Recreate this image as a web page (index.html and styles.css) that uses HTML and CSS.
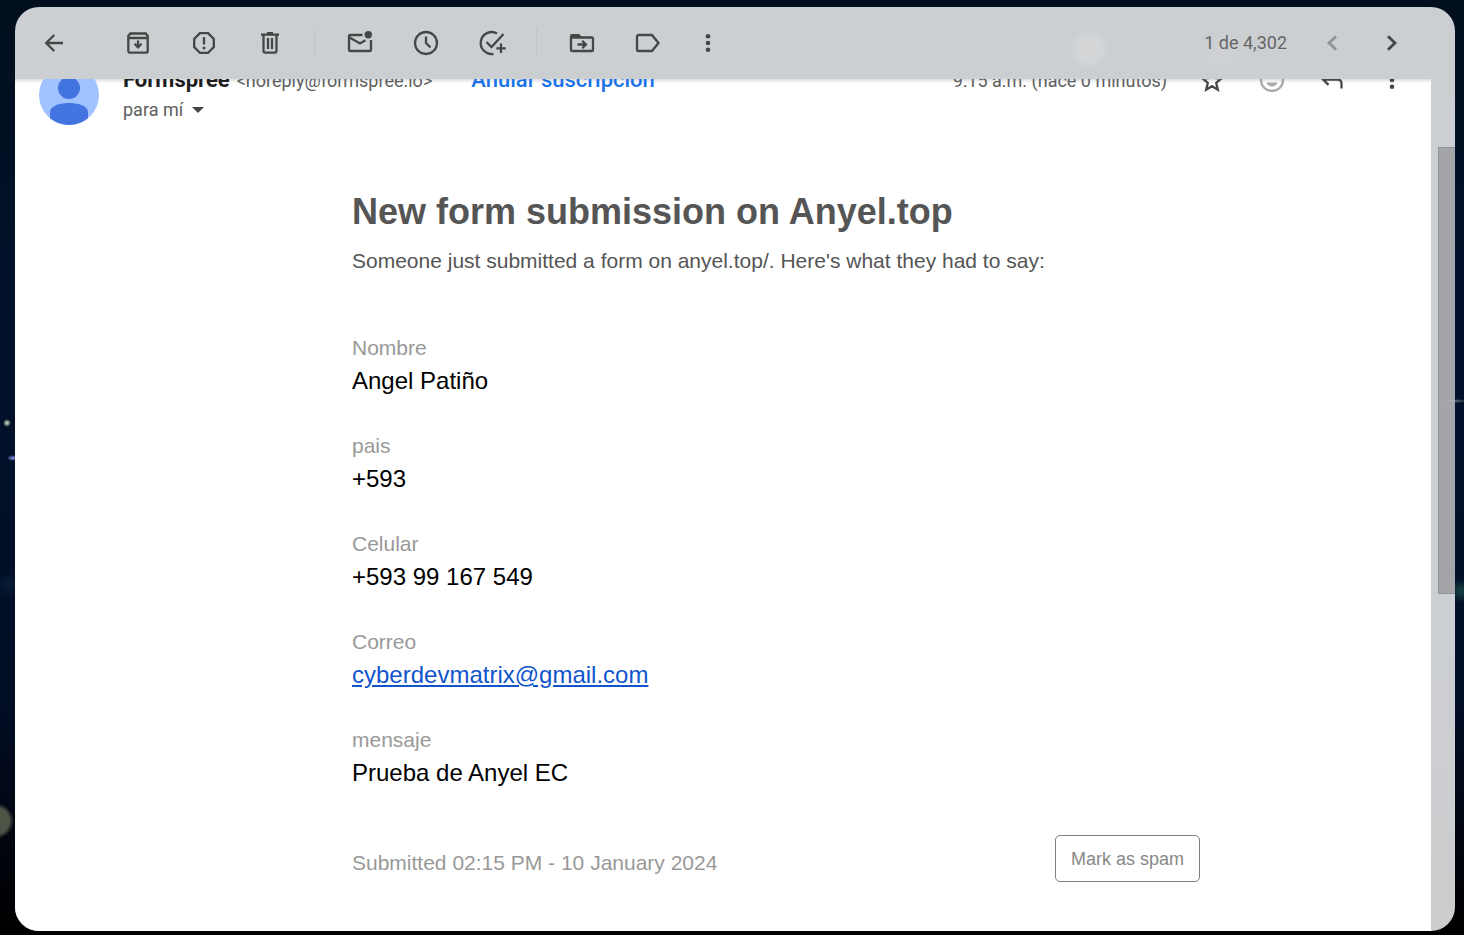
FILE: index.html
```
<!DOCTYPE html>
<html lang="es">
<head>
<meta charset="utf-8">
<meta name="viewport" content="width=device-width, initial-scale=1">
<title>New form submission on Anyel.top</title>
<link rel="stylesheet" href="styles.css">
</head>
<body>
<main class="window">
  <header class="toolbar">
    <button class="tool tool-back" aria-label="Volver"><svg class="icon" viewBox="0 0 30 30"><path class="line" d="M24 15H8M15.200 7L7.200 15l8 8"/></svg></button>
    <div class="group">
      <button class="tool" aria-label="Archivar"><svg class="icon" viewBox="0 0 30 30"><path class="line" d="M5.300 9.500V23a1.700 1.700 0 0 0 1.700 1.700h16a1.700 1.700 0 0 0 1.700-1.700V8l-2-2.500h-15.400l-2 2.500v2h19M15 12.500v6.500M11.500 15.800l3.500 3.500 3.500-3.500"/></svg></button>
      <button class="tool" aria-label="Marcar como spam"><svg class="icon" viewBox="0 0 30 30"><path class="line" d="M10.900 5.200h8.200l5.700 5.700v8.200l-5.700 5.700h-8.200l-5.700-5.700v-8.200zM15 9v7.500"/><circle cx="15" cy="20" r="1.500"/></svg></button>
      <button class="tool" aria-label="Eliminar"><svg class="icon" viewBox="0 0 30 30"><path class="line" d="M6 6.700h18M12 5.200h6M8.500 7v16.300a1.300 1.300 0 0 0 1.300 1.300h10.400a1.300 1.300 0 0 0 1.300-1.300V7M13 10v11M17 10v11"/></svg></button>
    </div>
    <div class="group">
      <button class="tool" aria-label="Marcar como no leído"><svg class="icon" viewBox="0 0 30 30"><path class="line" d="M17.500 7H5.500a1.500 1.500 0 0 0-1.500 1.500V21.500a1.500 1.500 0 0 0 1.500 1.500h19a1.500 1.500 0 0 0 1.500-1.500V12M4.500 9.500L15 15.500l5.500-3.200"/><circle cx="23.300" cy="6.700" r="3.700"/></svg></button>
      <button class="tool" aria-label="Posponer"><svg class="icon" viewBox="0 0 30 30"><circle class="line" cx="15" cy="15" r="11"/><path class="line" d="M15 8.500V15l4.500 4.500"/></svg></button>
      <button class="tool" aria-label="Agregar a Tasks"><svg class="icon" viewBox="0 0 30 30"><path class="line" d="M20 5.400A11 11 0 1 0 16.500 25.900M9.500 14l5 5L26.500 6M24 15.500v9.500M19.300 20.300h9.500"/></svg></button>
    </div>
    <div class="group">
      <button class="tool" aria-label="Mover a"><svg class="icon" viewBox="0 0 30 30"><path class="line" d="M4 8v13.500a1.500 1.500 0 0 0 1.500 1.500h19a1.500 1.500 0 0 0 1.500-1.500v-10.500a1.500 1.500 0 0 0-1.500-1.500H4M10.500 16.500h8M15.200 12.700l3.800 3.800-3.800 3.800"/><path d="M3 10V8a2 2 0 0 1 2-2h7l4 4z"/></svg></button>
      <button class="tool" aria-label="Etiquetas"><svg class="icon" viewBox="0 0 30 30"><path class="line" d="M5.500 7h13.500l6.500 8-6.500 8H5.500a1.500 1.500 0 0 1-1.500-1.500v-13A1.500 1.500 0 0 1 5.500 7z"/></svg></button>
      <button class="tool tool-more" aria-label="Más"><svg class="icon" viewBox="0 0 30 30"><circle cx="15" cy="8.300" r="2.300"/><circle cx="15" cy="15" r="2.300"/><circle cx="15" cy="21.700" r="2.300"/></svg></button>
    </div>
    <nav class="pager" aria-label="Mensajes">
      <span class="count">1 de 4,302</span>
      <button class="round faded" aria-label="Más recientes"><svg class="icon" viewBox="0 0 30 30"><path class="line bold" d="M19 8.500L12 15l7 6.500"/></svg></button>
      <button class="round" aria-label="Anteriores"><svg class="icon" viewBox="0 0 30 30"><path class="line bold" d="M11 8.300L18 15l-7 6.700"/></svg></button>
    </nav>
  </header>
  <div class="body">
    <article class="message">
      <header class="sender">
        <svg class="avatar" viewBox="0 0 60 60" aria-hidden="true"><circle class="avatar-disc" cx="30" cy="30" r="30"/><circle class="avatar-figure" cx="30" cy="23" r="11"/><path class="avatar-figure" d="M11 53.200V47c0-5 7-9 19-9s19 4 19 9v6.200A30 30 0 0 1 11 53.200z"/></svg>
        <div class="who">
          <div class="from">
            <strong class="name">Formspree</strong>
            <span class="address">&lt;noreply@formspree.io&gt;</span>
            <a class="unsubscribe" href="#">Anular suscripción</a>
          </div>
          <button class="recipients">para mí <svg class="caret" viewBox="0 0 12 6"><path d="M0 0h12L6 6z"/></svg></button>
        </div>
        <time class="date">9:15 a.m. (hace 0 minutos)</time>
        <div class="actions">
          <button class="round" aria-label="Destacar"><svg class="icon" viewBox="0 0 30 30"><path class="line" d="M15 6.500l2.600 6.400 6.700.6-5.100 4.400 1.600 6.800-5.800-3.500-5.800 3.500 1.600-6.800-5.100-4.400 6.700-.6z"/></svg></button>
          <button class="round faded" aria-label="Reaccionar"><svg class="icon" viewBox="0 0 30 30"><circle class="line" cx="15" cy="15" r="11"/><path d="M9.300 17.500h11.400c-1 2.500-3 4-5.700 4s-4.700-1.500-5.700-4z"/><circle cx="11" cy="11.500" r="1.700"/><circle cx="19" cy="11.500" r="1.700"/></svg></button>
          <button class="round" aria-label="Responder"><svg class="icon" viewBox="0 0 30 30"><path class="line" d="M11.500 8.500L5.800 14.200l5.700 5.700M6 14.500H20.500c3 0 4 2 4 4V23.500"/></svg></button>
          <button class="round" aria-label="Más opciones"><svg class="icon" viewBox="0 0 30 30"><circle cx="15" cy="8.300" r="2.300"/><circle cx="15" cy="15" r="2.300"/><circle cx="15" cy="21.700" r="2.300"/></svg></button>
        </div>
      </header>
      <section class="content" lang="en">
        <h1 class="title">New form submission on Anyel.top</h1>
        <p class="intro">Someone just submitted a form on anyel.top/. Here's what they had to say:</p>
        <dl class="fields">
          <dt>Nombre</dt><dd>Angel Patiño</dd>
          <dt>pais</dt><dd>+593</dd>
          <dt>Celular</dt><dd>+593 99 167 549</dd>
          <dt>Correo</dt><dd><a class="mail" href="mailto:cyberdevmatrix@gmail.com">cyberdevmatrix@gmail.com</a></dd>
          <dt>mensaje</dt><dd>Prueba de Anyel EC</dd>
        </dl>
        <footer class="foot">
          <span>Submitted 02:15 PM - 10 January 2024</span>
          <button class="spam">Mark as spam</button>
        </footer>
      </section>
    </article>
    <div class="track"><div class="thumb"></div></div>
  </div>
</main>
</body>
</html>
```
FILE: styles.css
```
* { box-sizing: border-box; }

body {
  margin: 0;
  min-height: 100vh;
  display: flex;
  padding: 7px 9px 4px 15px;
  font-family: Roboto, "Open Sans", sans-serif;
  background:
    radial-gradient(circle at 1089px 49px, #25313a 12px, transparent 20px),
    radial-gradient(circle at 1222px 56px, #101c28 6px, transparent 20px),
    radial-gradient(circle at 7px 423px, #b0c0a8 1px, transparent 4px),
    radial-gradient(ellipse 6px 3px at 13px 458px, #8d96f0, transparent),
    radial-gradient(circle at 8px 585px, #071c33 2px, transparent 12px),
    radial-gradient(circle at -4px 821px, #4d5547 13px, transparent 18px),
    radial-gradient(circle at 1461px 591px, #123a3e 3px, transparent 12px),
    radial-gradient(ellipse 12px 2px at 1456px 401px, #5c6d78, transparent),
    linear-gradient(#020f1e, #02112a 30%, #020e26 75%, #000105 96%, #000);
}

.window {
  flex: 1;
  display: flex;
  flex-direction: column;
  border-radius: 24px;
  overflow: hidden;
  background: rgba(255, 255, 255, .8);
}

button {
  border: 0;
  padding: 0;
  background: none;
  color: #444746;
  font: inherit;
  display: flex;
  align-items: center;
  justify-content: center;
}

.icon { width: 30px; height: 30px; fill: currentColor; }
.line { fill: none; stroke: currentColor; stroke-width: 2.3; }
.line.bold { stroke-width: 2.8; }

.toolbar {
  height: 72px;
  flex: none;
  display: flex;
  align-items: center;
  padding: 0 33px 0 9px;
}
.tool { width: 66px; height: 60px; }
.tool-back { width: 60px; margin-right: 21px; }
.tool-more { width: 54px; }
.group { display: flex; align-items: center; }
.group + .group::before {
  content: "";
  width: 1px;
  height: 30px;
  margin: 0 12px 0 11px;
  background: #c0c3c6;
}
.pager { margin-left: auto; display: flex; align-items: center; }
.count { margin-right: 15px; padding-bottom: 2px; font-size: 18px; color: #666; }
.round { width: 60px; height: 30px; }
.faded { opacity: .45; }

.body { flex: 1; display: flex; overflow: hidden; }
.message {
  flex: 1;
  background: #fff;
  box-shadow: inset 0 4px 4px -3px rgba(0, 0, 0, .2);
}

/* The message is scrolled slightly under the toolbar. */
.sender {
  display: flex;
  margin-top: -14px;
  padding: 0 9px 0 24px;
}
.avatar { width: 60px; height: 60px; margin-right: 24px; }
.avatar-disc { fill: #a0c2ff; }
.avatar-figure { fill: #4374e0; }
.who { flex: 1; line-height: 30px; }
.from { height: 30px; display: flex; align-items: baseline; white-space: nowrap; }
.name { font-size: 22px; color: #1f1f1f; }
.address { margin-left: 7px; font-size: 18px; color: #5e5e5e; }
.unsubscribe {
  margin-left: 39px;
  font-size: 22px;
  font-weight: 500;
  color: #1a73e8;
  text-decoration: none;
}
.recipients { gap: 9px; font-size: 18px; line-height: 30px; color: #5e5e5e; }
.caret { width: 12px; height: 6px; fill: #444746; }
.date { margin-right: 15px; font-size: 18px; line-height: 32px; color: #5e5e5e; }
.actions { display: flex; }

.content {
  max-width: 954px;
  margin: 63px auto 0;
  padding-left: 106px;
  font-family: "Liberation Sans", Arial, sans-serif;
}
.title { margin: 0; font-size: 36px; line-height: 48px; color: #555; }
.intro { margin: 9px 0 0; font-size: 21px; line-height: 32px; color: #555; }
.fields { margin: 55px 0 0; }
.fields dt { font-size: 21px; line-height: 32px; color: #999; }
.fields dd { margin: 0 0 32px; font-size: 24px; line-height: 34px; color: #000; }
.mail { color: #15c; }
.foot {
  display: flex;
  justify-content: space-between;
  align-items: flex-end;
  margin-top: 45px;
  padding-bottom: 32px;
  font-size: 21px;
  line-height: 38px;
  color: #999;
}
.spam {
  height: 47px;
  padding: 0 15px;
  border: 1px solid #808080;
  border-radius: 5px;
  font-size: 18px;
  color: #888;
}

.track {
  width: 24px;
  padding-left: 7px;
  display: grid;
  grid-template-rows: 68fr 447fr 337fr;
}
.thumb {
  grid-row: 2;
  border: 1px solid rgba(0, 0, 0, .1);
  border-right: 0;
  background: rgba(0, 0, 0, .2);
}
```
